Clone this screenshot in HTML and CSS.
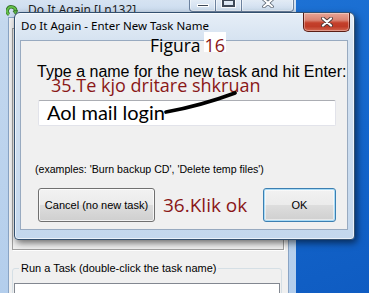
FILE: index.html
```html
<!DOCTYPE html>
<html lang="sq">
<head>
    <meta charset="UTF-8">
    <title>Do It Again - Enter New Task Name</title>
    <link rel="stylesheet" href="styles.css">
</head>
<body>
<div id="desktop">

    <!-- main window, behind the dialog -->
    <div class="bgwin">
        <div class="bg-titlebar">
            <svg class="bg-icon" width="12" height="11" viewBox="0 0 12 11">
                <path d="M3 9.5 A4.2 4.2 0 1 1 9.5 7" fill="none" stroke="#2f6b22" stroke-width="3.4"/>
                <path d="M3 9.5 A4.2 4.2 0 1 1 9.5 7" fill="none" stroke="#63c04a" stroke-width="2"/>
                <path d="M7 6 L11.5 5.5 L9.8 9.8 Z" fill="#63c04a" stroke="#2f6b22" stroke-width="0.8"/>
            </svg>
            <span class="bg-title">Do It Again [Ln132]</span>
            <div class="caption-btns">
                <span class="cap-btn cap-min"><i></i></span>
                <span class="cap-btn cap-max"><i></i></span>
                <span class="cap-btn cap-close">
                    <svg width="12" height="10" viewBox="0 0 12 10">
                        <path d="M2 1.5 L10 8.5 M10 1.5 L2 8.5" stroke="#55606e" stroke-width="3.6" stroke-linecap="round"/>
                        <path d="M2 1.5 L10 8.5 M10 1.5 L2 8.5" stroke="#fff" stroke-width="2" stroke-linecap="round"/>
                    </svg>
                </span>
            </div>
        </div>
        <div class="bg-client">
            <div class="bg-panel"></div>
            <fieldset class="run-group">
                <legend>Run a Task (double-click the task name)</legend>
                <div class="task-list"></div>
            </fieldset>
        </div>
    </div>

    <!-- the dialog -->
    <div class="dialog">
        <div class="dlg-titlebar">
            <span class="dlg-title">Do It Again - Enter New Task Name</span>
            <span class="dlg-close">
                <svg width="12" height="10" viewBox="0 0 12 10">
                    <path d="M2 1.5 L10 8.5 M10 1.5 L2 8.5" stroke="#4a3a38" stroke-width="3.8" stroke-linecap="round"/>
                    <path d="M2 1.5 L10 8.5 M10 1.5 L2 8.5" stroke="#fff" stroke-width="2.2" stroke-linecap="round"/>
                </svg>
            </span>
        </div>
        <div class="dlg-client">
            <div class="prompt">Type a name for the new task and hit Enter:</div>
            <div class="note note-name">35.Te kjo dritare shkruan</div>
            <div class="task-input">Aol mail login</div>
            <div class="examples">(examples: 'Burn backup CD', 'Delete temp files')</div>
            <div class="buttons">
                <button class="btn btn-cancel">Cancel (no new task)</button>
                <span class="note note-ok">36.Klik ok</span>
                <button class="btn btn-ok">OK</button>
            </div>
        </div>
    </div>

    <!-- annotations drawn over the screenshot -->
    <div class="figure-label"><span class="fig-word">Figura</span><span class="fig-num">16</span></div>
    <svg class="pointer" width="82" height="35" viewBox="0 0 82 35">
        <path d="M6 27 Q40 21 75 8" fill="none" stroke="#000" stroke-width="3.8" stroke-linecap="round"/>
    </svg>
</div>
</body>
</html>
```

FILE: styles.css
```css
* {
    margin: 0;
    padding: 0;
    box-sizing: border-box;
}

body {
    width: 369px;
    height: 293px;
    overflow: hidden;
}

#desktop {
    position: relative;
    width: 369px;
    height: 293px;
    overflow: hidden;
    background: linear-gradient(160deg, #2379da 0%, #1466cc 60%, #0f5cc2 100%);
}

/* ---- background window ---- */

.bgwin {
    position: absolute;
    left: 0;
    top: -8px;
    width: 296px;
    height: 320px;
    display: flex;
    flex-direction: column;
    background: linear-gradient(180deg, #dce7f3 0, #c4d8ee 30px, #b2cdec 100%);
    border-radius: 0 6px 0 0;
}

.bg-titlebar {
    display: flex;
    align-items: flex-start;
    height: 30px;
    padding: 8px 2px 0 6px;
}

.bg-icon {
    margin-top: 5px;
}

.bg-title {
    margin: 3px 0 0 10px;
    font: 12px/14px "Noto Sans", sans-serif;
    color: #1e1e1e;
}

.caption-btns {
    display: flex;
    margin: -7px 0 0 auto;
    height: 19px;
}

.cap-btn {
    display: flex;
    align-items: center;
    justify-content: center;
    height: 19px;
    border: 1px solid rgba(70, 95, 130, 0.75);
    border-left: none;
    background: linear-gradient(180deg, rgba(255, 255, 255, 0.55), rgba(205, 220, 238, 0.6));
    box-shadow: inset 0 0 0 1px rgba(255, 255, 255, 0.5);
}

.cap-min {
    width: 27px;
    border-left: 1px solid rgba(70, 95, 130, 0.75);
    border-radius: 0 0 0 4px;
}

.cap-min i {
    display: block;
    width: 12px;
    height: 3px;
    margin-top: 6px;
    background: #3d4857;
    border: 1px solid #fff;
}

.cap-max {
    width: 26px;
}

.cap-max i {
    display: block;
    width: 13px;
    height: 9px;
    border: 2px solid #3d4857;
    border-top-width: 3px;
    outline: 1px solid rgba(255, 255, 255, 0.8);
}

.cap-close {
    width: 52px;
    border-radius: 0 0 4px 0;
}

.bg-client {
    flex: 1;
    margin: 0 7px 0 8px;
    padding: 0 4px 0 3px;
    border: 1px solid #8aa4c4;
    background: #f0f0f0;
}

.bg-panel {
    margin-top: 10px;
    height: 222px;
    border: 1px solid #a0a0a0;
    box-shadow: 1px 1px 0 #fff;
}

.run-group {
    margin: 12px 2px 0 0;
    padding: 8px 1px 4px 0;
    border: 1px solid #d5dfe5;
    border-radius: 3px;
}

.run-group legend {
    margin-left: 6px;
    padding: 0 2px;
    font: 11px/13px "Liberation Sans", Arial, sans-serif;
    color: #000;
}

.task-list {
    height: 40px;
    margin-left: 1px;
    border: 1px solid #828790;
    background: #fff;
}

/* ---- dialog ---- */

.dialog {
    position: absolute;
    left: 14px;
    top: 12px;
    width: 341px;
    height: 228px;
    display: flex;
    flex-direction: column;
    padding: 0 6px 9px 5px;
    border: 1px solid #33506f;
    border-radius: 6px 6px 4px 4px;
    background: linear-gradient(180deg, #e6eef7 0, #d6e3f1 27px, #c3d7ed 100%);
    box-shadow: inset 0 0 0 1px rgba(255, 255, 255, 0.65), 2px 3px 7px rgba(0, 0, 0, 0.55);
}

.dlg-titlebar {
    display: flex;
    align-items: flex-start;
    justify-content: space-between;
    height: 27px;
}

.dlg-title {
    padding: 6px 0 0 1px;
    font: 11.5px/14px "Noto Sans", sans-serif;
    color: #000;
}

.dlg-close {
    display: flex;
    align-items: center;
    justify-content: center;
    width: 47px;
    height: 19px;
    margin-right: -2px;
    border: 1px solid #5a1d15;
    border-top: none;
    border-radius: 0 0 5px 5px;
    background: linear-gradient(180deg, #e8a596 0%, #d98372 40%, #c4402b 55%, #bf3b27 75%, #d3674f 100%);
    box-shadow: inset 0 0 0 1px rgba(255, 255, 255, 0.35);
}

.dlg-client {
    flex: 1;
    padding: 22px 11px 0 16px;
    border: 1px solid #98aac0;
    background: #f0f0f0;
}

.prompt {
    white-space: nowrap;
    font: 16px/17px "Liberation Sans", Arial, sans-serif;
    color: #000;
}

.note {
    white-space: nowrap;
    font-family: "Open Sans", sans-serif;
    color: #8a1717;
}

.note-name {
    margin: 1px 0 0 14px;
    font-size: 18px;
    line-height: 8px;
}

.task-input {
    width: 298px;
    height: 26px;
    margin: 11px 0 0 1px;
    padding-left: 8px;
    border: 1px solid #e2e3ea;
    border-top-color: #abadb3;
    border-radius: 2px;
    background: #fff;
    font: 20px/22px Lato, sans-serif;
    color: #000;
}

.examples {
    margin: 37px 0 0 -2px;
    white-space: nowrap;
    font: 10.6px/13px "Liberation Sans", Arial, sans-serif;
    color: #000;
}

.buttons {
    display: flex;
    align-items: center;
    height: 34px;
    margin-top: 12px;
}

.btn {
    height: 34px;
    border: 1px solid #707070;
    border-radius: 3px;
    background: linear-gradient(180deg, #f2f2f2 0%, #ebebeb 50%, #dddddd 51%, #cfcfcf 100%);
    box-shadow: inset 0 0 0 1px rgba(255, 255, 255, 0.75);
    font: 11px "Liberation Sans", Arial, sans-serif;
    color: #000;
}

.btn-cancel {
    width: 117px;
    margin-left: 1px;
}

.note-ok {
    margin-left: 8px;
    font-size: 19px;
    line-height: 20px;
}

.btn-ok {
    width: 73px;
    margin-left: auto;
    border-color: #3c7fb1;
    box-shadow: inset 0 0 0 1px #a9dbf6, inset 0 0 0 2px rgba(255, 255, 255, 0.5);
}

/* ---- annotations ---- */

.figure-label {
    position: absolute;
    left: 150px;
    top: 32px;
    display: flex;
    align-items: baseline;
}

.fig-word {
    font: 17.5px/20px "Open Sans", sans-serif;
    color: #000;
}

.fig-num {
    margin-left: 3px;
    padding: 6px 1px 0 1px;
    background: #fff;
    font: 18px/14px "Open Sans", sans-serif;
    color: #8a1717;
}

.pointer {
    position: absolute;
    left: 160px;
    top: 85px;
}
```
